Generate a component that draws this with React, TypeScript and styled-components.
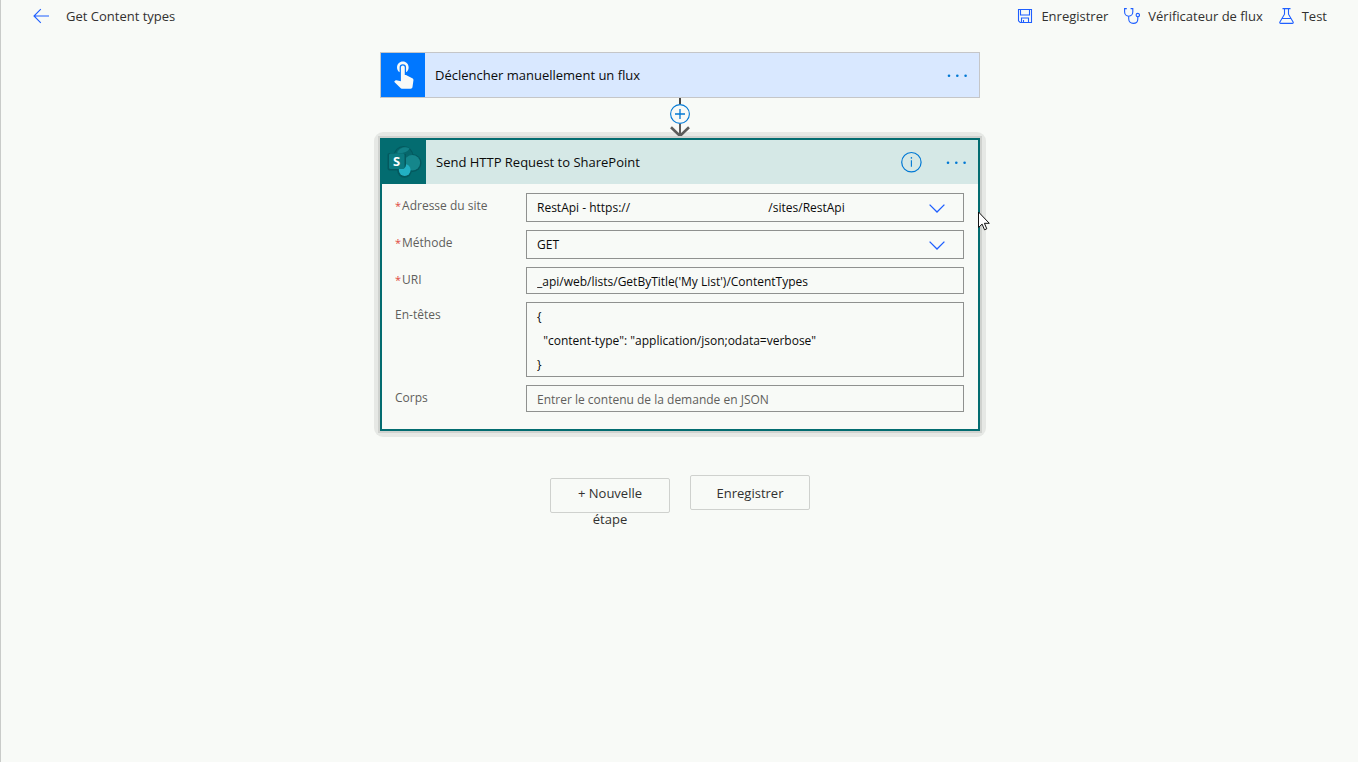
import React from "react";
import styled, { createGlobalStyle } from "styled-components";

const color = {
  page: "#f8faf7",
  text: "#323130",
  ink: "#0b0b0b",
  label: "#605e5c",
  link: "#0078d4",
  accent: "#1f5fff",
  teal: "#036c70",
  field: "#8f918f",
};

const GlobalStyle = createGlobalStyle`
  *, *::before, *::after { box-sizing: border-box; }
  body {
    margin: 0;
    background: ${color.page};
    color: ${color.text};
    font-family: "Segoe UI", "Open Sans", "Noto Sans", sans-serif;
    font-size: 13px;
  }
  button, input, select, textarea { font: inherit; color: inherit; }
`;

const Page = styled.div`
  min-height: 100vh;
  padding-left: 1px;
  border-left: 1px solid #c9cbc9;
`;

const TopBar = styled.header`
  display: flex;
  align-items: center;
  justify-content: space-between;
  height: 32px;
  padding: 0 31px;
`;

const TitleGroup = styled.div`
  display: flex;
  align-items: center;
  gap: 17px;
`;

const Title = styled.h1`
  margin: 0;
  font-size: 13px;
  font-weight: 400;
  line-height: 20px;
`;

const Commands = styled.nav`
  display: flex;
  align-items: center;
  gap: 16px;
`;

const PlainButton = styled.button`
  display: flex;
  align-items: center;
  gap: 8px;
  padding: 0;
  border: 0;
  background: none;
  line-height: 20px;
  cursor: pointer;

  svg { display: block; }
`;

const Flow = styled.main`
  display: flex;
  flex-direction: column;
  align-items: center;
  width: 100%;
  max-width: 600px;
  margin: 0 auto;
  padding: 20px 0;
  isolation: isolate;
`;

const TriggerCard = styled.section`
  width: 100%;
  border: 1px solid #c5c6c8;
`;

const ActionCard = styled.section`
  position: relative;
  width: 100%;
  border: 2px solid ${color.teal};
  background: ${color.page};
  box-shadow: 0 0 0 2px #d0d2cf;

  &::before {
    content: "";
    position: absolute;
    inset: -8px;
    z-index: -1;
    border-radius: 9px;
    background: #e6e8e5;
  }
`;

const CardHeader = styled.div<{ $tint: string }>`
  display: flex;
  align-items: center;
  height: 44px;
  padding-right: 12px;
  background: ${(p) => p.$tint};
`;

const CardIcon = styled.div<{ $fill: string }>`
  width: 44px;
  height: 44px;
  background: ${(p) => p.$fill};

  svg { display: block; }
`;

const CardTitle = styled.h2`
  flex: 1;
  margin: 0;
  padding-left: 10px;
  color: ${color.ink};
  font-size: 13px;
  font-weight: 400;
  line-height: 20px;
`;

const CardActions = styled.div`
  display: flex;
  align-items: center;
  gap: 24px;
`;

const Connector = styled.div`
  display: flex;
  flex-direction: column;
  align-items: center;

  svg { display: block; }
`;

const Form = styled.form`
  display: flex;
  flex-direction: column;
  gap: 8px;
  padding: 9px 14px 17px 13px;
`;

const Row = styled.div`
  display: flex;
  align-items: flex-start;
`;

const Label = styled.label`
  flex: 0 0 131px;
  padding-top: 3px;
  color: ${color.label};
  font-size: 12px;
  line-height: 20px;
`;

const Required = styled.span`
  padding-right: 1px;
  color: #e0483e;
  font-size: 11px;
`;

const Control = styled.div`
  position: relative;
  flex: 1;
  min-width: 0;
`;

const fieldStyle = `
  display: block;
  width: 100%;
  margin: 0;
  border: 1px solid ${color.field};
  border-radius: 0;
  background: transparent;
  color: ${color.ink};
  font-size: 12px;
  outline: none;
`;

const Input = styled.input`
  ${fieldStyle}
  height: 27px;
  padding: 1px 10px 0;

  &::placeholder { color: ${color.label}; opacity: 1; }
`;

const Select = styled.select`
  ${fieldStyle}
  height: 29px;
  padding: 0 40px 0 10px;
  appearance: none;
`;

const TextArea = styled.textarea`
  ${fieldStyle}
  height: 75px;
  padding: 2px 10px 0;
  line-height: 24px;
  resize: none;
  overflow: hidden;
`;

const Chevron = styled.svg`
  position: absolute;
  top: 11px;
  right: 19px;
  pointer-events: none;
`;

const Pointer = styled.svg`
  position: absolute;
  top: 71px;
  left: 100%;
  pointer-events: none;
`;

const Footer = styled.div`
  display: flex;
  align-items: baseline;
  gap: 20px;
  padding-top: 44px;
`;

const FooterButton = styled.button<{ $lift: number }>`
  display: flex;
  align-items: flex-start;
  justify-content: center;
  width: 120px;
  height: 35px;
  padding: ${(p) => p.$lift}px 20px 0;
  border: 1px solid #cfd1ce;
  border-radius: 2px;
  background: transparent;
  line-height: 26px;
  text-align: center;
  cursor: pointer;
`;

function Dots() {
  return (
    <svg width="20" height="6" viewBox="0 0 20 6" fill={color.link}>
      <circle cx="2" cy="3.8" r="1.3" />
      <circle cx="10.3" cy="3.8" r="1.3" />
      <circle cx="18.6" cy="3.8" r="1.3" />
    </svg>
  );
}

function BackIcon() {
  return (
    <svg width="16" height="16" viewBox="0 0 16 16" fill="none" stroke={color.accent} strokeWidth="1.1">
      <path d="M7.8 1.2 1 8l6.8 6.8M1 8h15" />
    </svg>
  );
}

function SaveIcon() {
  return (
    <svg width="16" height="16" viewBox="0 0 16 16" fill="none" stroke={color.accent} strokeWidth="1.1">
      <path d="M1.5 1.5h13v13H3.2l-1.7-1.7zM3.5 1.5v5.5h9V1.5M4.5 14.5V10h7v4.5M6.5 12v2.5" />
    </svg>
  );
}

function StethoscopeIcon() {
  return (
    <svg width="16" height="16" viewBox="0 0 16 16" fill="none" stroke={color.accent} strokeWidth="1.1">
      <path d="M2.8.6H.6v3.2c0 2.6 1.7 4.4 4.1 4.4s4.1-1.8 4.1-4.4V.6H6.6M4.7 8.2v2.6c0 2.8 1.9 4.6 4.5 4.6s4.6-1.8 4.6-4.4V8.8" />
      <circle cx="13.8" cy="7.1" r="1.7" />
    </svg>
  );
}

function BeakerIcon() {
  return (
    <svg width="15" height="16" viewBox="0 0 15 16" fill="none" stroke={color.accent} strokeWidth="1.1">
      <path d="M3.5.6h8M5.5.6v5.6L.9 14c-.4.7 0 1.4.8 1.4h11.6c.8 0 1.2-.7.8-1.4L9.5 6.2V.6M3 10.5h9" />
    </svg>
  );
}

function TouchIcon() {
  return (
    <svg width="44" height="44" viewBox="0 0 44 44" fill={color.page}>
      <path
        transform="translate(7 4.7) scale(1.29)"
        d="M9 11.24V7.5a2.5 2.5 0 0 1 5 0v3.74c1.21-.81 2-2.18 2-3.74C16 5.01 13.99 3 11.5 3S7 5.01 7 7.5c0 1.56.79 2.93 2 3.74zm9.84 4.63l-4.54-2.26c-.17-.07-.35-.11-.54-.11H13v-6c0-.83-.67-1.5-1.5-1.5S10 6.67 10 7.5v10.74l-3.43-.72c-.08-.01-.15-.03-.24-.03-.31 0-.59.13-.79.33l-.79.8 4.94 4.94c.27.27.65.44 1.06.44h6.79c.75 0 1.33-.55 1.44-1.28l.75-5.27c.01-.07.02-.14.02-.2 0-.62-.38-1.16-.91-1.38z"
      />
    </svg>
  );
}

function SharePointIcon() {
  return (
    <svg width="44" height="44" viewBox="0 0 44 44">
      <g fill="#04595e">
        <circle cx="21.5" cy="16" r="10" />
        <circle cx="30.5" cy="23" r="9" />
        <circle cx="22.5" cy="30.5" r="7.3" />
        <rect x="5.500" y="13" width="17" height="17.500" rx="2" />
      </g>
      <circle cx="21.5" cy="16" r="9" fill="#06666b" />
      <path d="M15.5 11.5a9 9 0 0 1 12-3c-1.500 3-5 4.500-12 5z" fill="#128086" />
      <circle cx="30.300" cy="22.700" r="7.800" fill="#15868b" />
      <circle cx="22.700" cy="30" r="5.900" fill="#22b0c3" />
      <path d="M15 14h9v10.500a4 4 0 0 1-4 4h-5z" fill="#04595e" />
      <rect x="7" y="13.500" width="15.500" height="15.500" rx="1.500" fill="#0c7a80" />
      <text x="14.700" y="26.200" fill="#fff" fontSize="13" fontWeight="700" textAnchor="middle">
        S
      </text>
    </svg>
  );
}

function InfoIcon() {
  return (
    <svg width="22" height="22" viewBox="0 0 22 22">
      <circle cx="11.4" cy="11.2" r="9.700" fill="none" stroke={color.link} strokeWidth="1.200" />
      <path d="M11.4 9.200v6.500" stroke={color.link} strokeWidth="1.100" />
      <circle cx="11.4" cy="6.900" r=".8" fill={color.link} />
    </svg>
  );
}

function ChevronDown() {
  return (
    <Chevron width="16" height="9" viewBox="0 0 16 9" fill="none" stroke={color.accent} strokeWidth="1.300">
      <path d="M.6.6 8 8l7.400-7.400" />
    </Chevron>
  );
}

type FieldProps = { id: string; label: string; required?: boolean; children: React.ReactNode };

function Field({ id, label, required, children }: FieldProps) {
  return (
    <Row>
      <Label htmlFor={id}>
        {required && <Required>*</Required>}
        {label}
      </Label>
      <Control>{children}</Control>
    </Row>
  );
}

const siteGap = "\u2003".repeat(11) + "\u00a0\u00a0";
const site = `RestApi - https://${siteGap}/sites/RestApi`;
const headers = '{\n  "content-type": "application/json;odata=verbose"\n}';

export default function App() {
  return (
    <>
      <GlobalStyle />
      <Page>
        <TopBar>
          <TitleGroup>
            <PlainButton aria-label="Retour">
              <BackIcon />
            </PlainButton>
            <Title>Get Content types</Title>
          </TitleGroup>
          <Commands>
            <PlainButton>
              <SaveIcon />
              Enregistrer
            </PlainButton>
            <PlainButton>
              <StethoscopeIcon />
              Vérificateur de flux
            </PlainButton>
            <PlainButton>
              <BeakerIcon />
              Test
            </PlainButton>
          </Commands>
        </TopBar>

        <Flow>
          <TriggerCard>
            <CardHeader $tint="#d9e8ff">
              <CardIcon $fill="#0077ff">
                <TouchIcon />
              </CardIcon>
              <CardTitle>Déclencher manuellement un flux</CardTitle>
              <CardActions>
                <PlainButton aria-label="Plus">
                  <Dots />
                </PlainButton>
              </CardActions>
            </CardHeader>
          </TriggerCard>

          <Connector>
            <svg width="20" height="6" viewBox="0 0 20 6">
              <path d="M10 0v6" stroke="#484644" strokeWidth="2" />
            </svg>
            <PlainButton aria-label="Insérer une étape">
              <svg width="20" height="20" viewBox="0 0 20 20" fill="none" stroke={color.link}>
                <circle cx="10" cy="10" r="9.400" strokeWidth="1.100" />
                <path d="M10 5v10M5 10h10" strokeWidth="1.300" />
              </svg>
            </PlainButton>
            <svg width="20" height="14" viewBox="0 0 20 14" fill="none" stroke="#5c5c5a">
              <path d="M10 0v12" strokeWidth="2" />
              <path d="M1 3.200l9 8.800 9-8.800" strokeWidth="2.600" />
            </svg>
          </Connector>

          <ActionCard>
            <CardHeader $tint="#d5e8e6">
              <CardIcon $fill={color.teal}>
                <SharePointIcon />
              </CardIcon>
              <CardTitle>Send HTTP Request to SharePoint</CardTitle>
              <CardActions>
                <PlainButton aria-label="Informations">
                  <InfoIcon />
                </PlainButton>
                <PlainButton aria-label="Plus">
                  <Dots />
                </PlainButton>
              </CardActions>
            </CardHeader>
            <Form>
              <Field id="site" label="Adresse du site" required>
                <Select id="site">
                  <option>{site}</option>
                </Select>
                <ChevronDown />
              </Field>
              <Field id="method" label="Méthode" required>
                <Select id="method">
                  <option>GET</option>
                </Select>
                <ChevronDown />
              </Field>
              <Field id="uri" label="URI" required>
                <Input id="uri" defaultValue="_api/web/lists/GetByTitle('My List')/ContentTypes" />
              </Field>
              <Field id="headers" label="En-têtes">
                <TextArea id="headers" spellCheck={false} defaultValue={headers} />
              </Field>
              <Field id="body" label="Corps">
                <Input id="body" placeholder="Entrer le contenu de la demande en JSON" />
              </Field>
            </Form>
            <Pointer width="12" height="20" viewBox="0 0 12 20">
              <path
                d="M.5 1v15.500l3.600-3.400 2.400 5.700 2.300-1-2.400-5.500h4.900z"
                fill="#fff"
                stroke="#111"
                strokeWidth="1"
              />
            </Pointer>
          </ActionCard>

          <Footer>
            <FooterButton $lift={1}>+ Nouvelle étape</FooterButton>
            <FooterButton $lift={4}>Enregistrer</FooterButton>
          </Footer>
        </Flow>
      </Page>
    </>
  );
}
